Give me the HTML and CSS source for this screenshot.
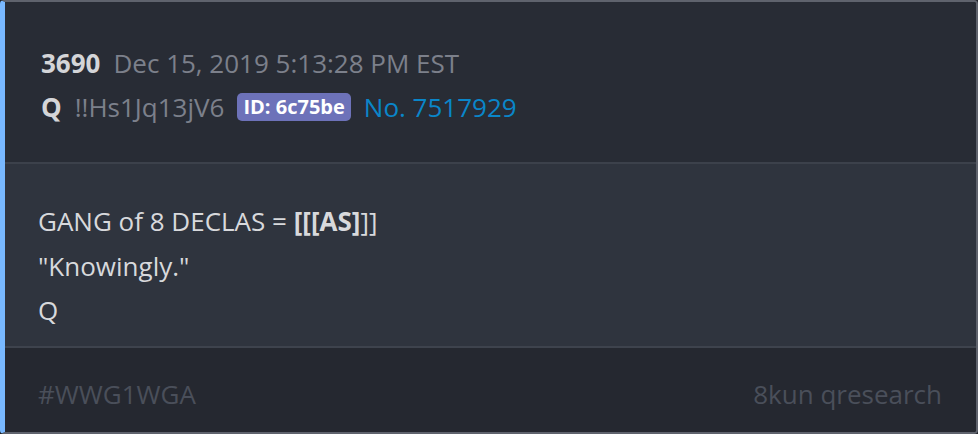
FILE: index.html
```html
<!DOCTYPE html>
<html lang="en">
<head>
  <meta charset="UTF-8">
  <title>Q 3690</title>
  <link rel="stylesheet" href="styles.css">
</head>
<body>
  <div class="post">
    <div class="post-head">
      <div class="line">
        <span class="num">3690</span>
        <span class="date">Dec 15, 2019 5:13:28 PM EST</span>
      </div>
      <div class="line">
        <span class="name">Q</span>
        <span class="trip">!!Hs1Jq13jV6</span>
        <span class="poster-id">ID: 6c75be</span>
        <span class="post-no">No. 7517929</span>
      </div>
    </div>

    <div class="post-body">
      <div>GANG of 8 DECLAS = <b>[[[AS]</b>]]</div>
      <div>"Knowingly."</div>
      <div>Q</div>
    </div>

    <div class="post-foot">
      <span>#WWG1WGA</span>
      <span>8kun qresearch</span>
    </div>
  </div>
</body>
</html>
```

FILE: styles.css
```css
body {
  margin: 0;
  background-color: #1e2128;
  font-family: "Open Sans", "Noto Sans", sans-serif;
  font-size: 26px;
}

.post {
  width: 978px;
  height: 434px;
  box-sizing: border-box;
  border: 2px solid #5f636d;
  border-left: 5px solid #78b8ff;
  border-radius: 4px;
  overflow: hidden;
  display: flex;
  flex-direction: column;
}

.line {
  line-height: 44px;
  display: flex;
  align-items: center;
  gap: 13px;
}

.post-head {
  background-color: #282c35;
  padding: 39px 36px 33px;
  border-bottom: 2px solid #3c414b;
}

.num,
.name {
  font-weight: bold;
  color: #d4d5d8;
}

.date,
.trip {
  color: #7c808b;
}

.poster-id {
  background-color: #6d72b9;
  color: #fff;
  font-weight: bold;
  font-size: 20px;
  line-height: 28px;
  padding: 0 6px;
  border-radius: 5px;
}

.post-no {
  color: #0a86c9;
}

.post-body {
  background-color: #2f343e;
  color: #d8d9dc;
  line-height: 44.5px;
  padding: 35px 33px 13px;
  border-bottom: 2px solid #3e434d;
}

.post-foot {
  flex: 1;
  background-color: #252830;
  color: #4a4f5a;
  line-height: 44px;
  padding: 24px 34px 0 33px;
  display: flex;
  justify-content: space-between;
}
```
